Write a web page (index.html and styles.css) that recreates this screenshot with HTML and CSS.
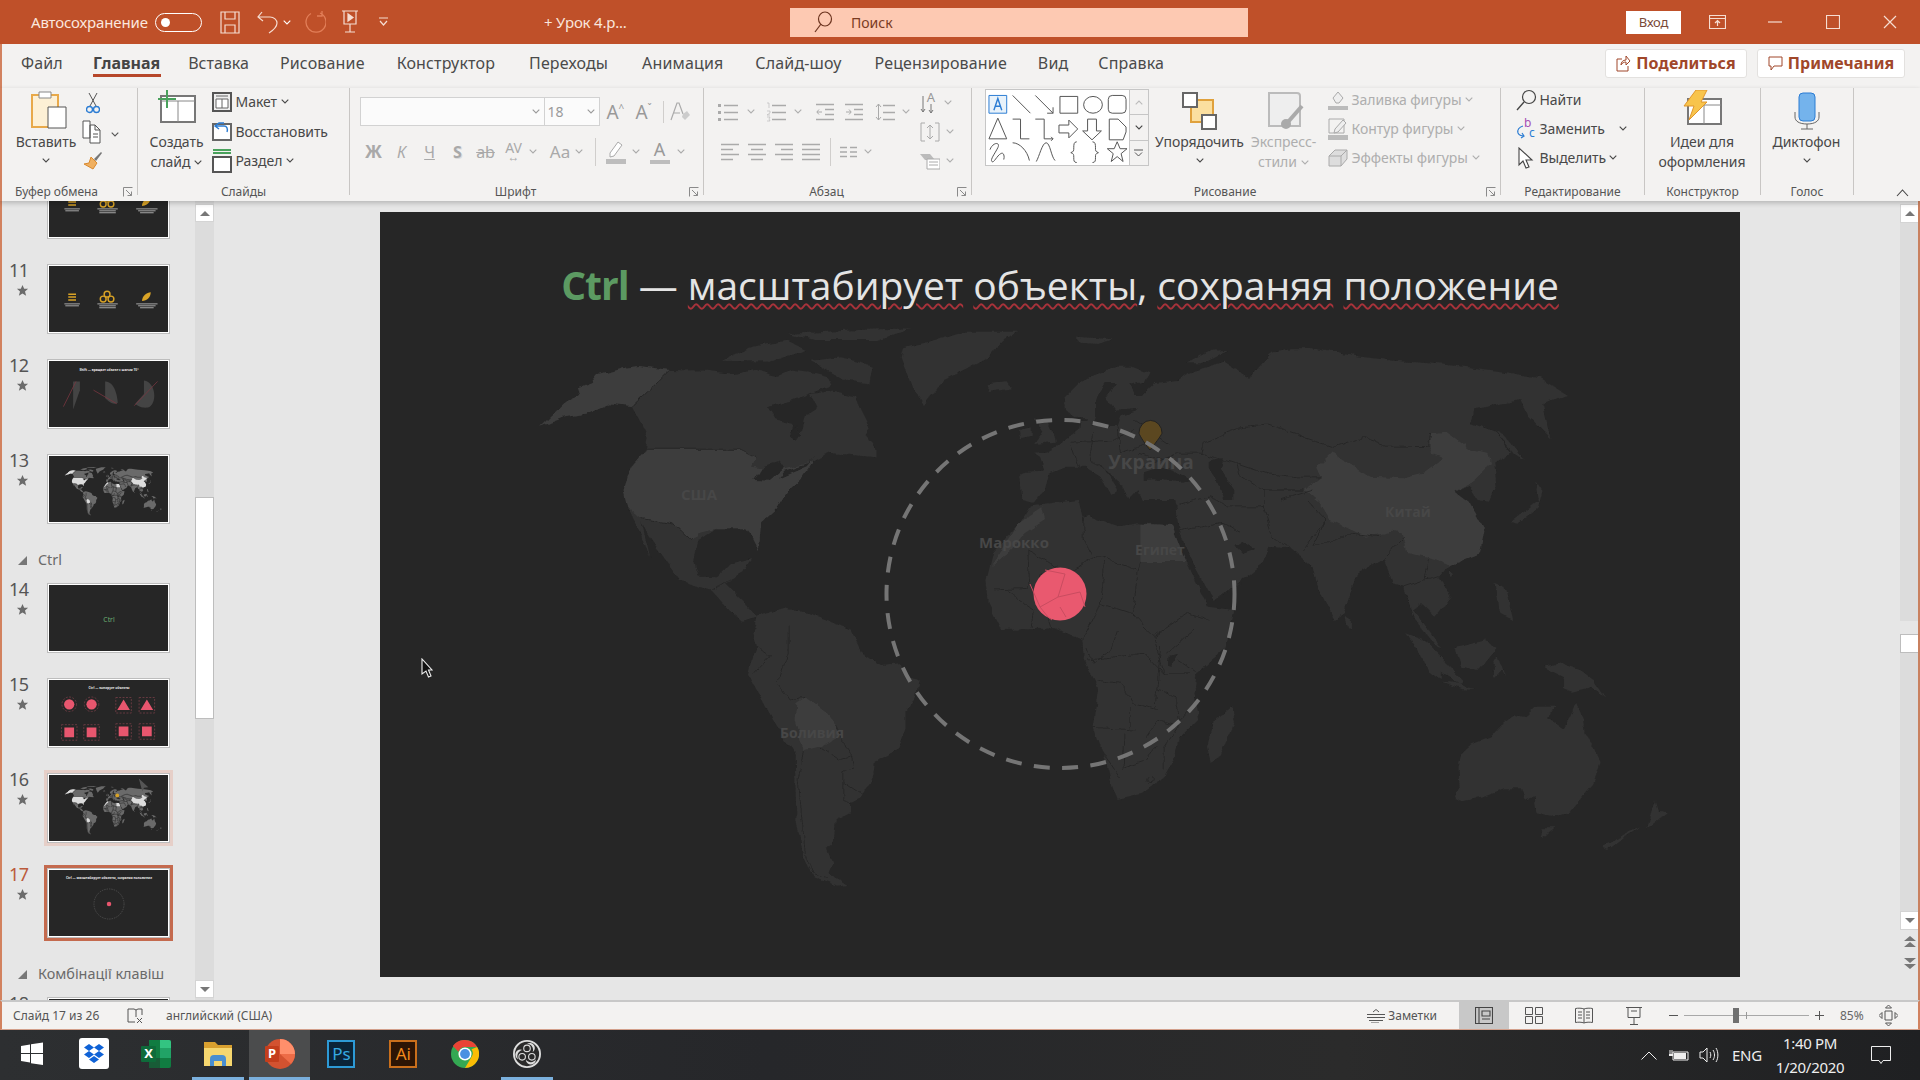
FILE: index.html
```html
<!DOCTYPE html>
<html lang="ru">
<head>
<meta charset="utf-8">
<title>PowerPoint</title>
<link rel="stylesheet" href="styles.css">
</head>
<body>
<svg class="defs" width="0" height="0" aria-hidden="true">
  <filter id="rough" x="-5%" y="-5%" width="110%" height="110%"><feTurbulence type="fractalNoise" baseFrequency=".09" numOctaves="2" seed="4"/><feDisplacementMap in="SourceGraphic" scale="6" xChannelSelector="R" yChannelSelector="G"/></filter>
  <symbol id="ch" viewBox="0 0 8 5"><path d="M.7.7 4 4 7.3.7" fill="none" stroke="currentColor" stroke-width="1.1"/></symbol>
  <symbol id="star" viewBox="0 0 14 14"><path d="M7 1l1.800 4h4.200L9.700 8l1.200 4.600L7 10.200 3.100 12.600 4.300 8 1 5h4.200z" fill="#6b6b6b"/></symbol>
  <symbol id="launch" viewBox="0 0 10 10"><path d="M.5 9.500V.5h9M3 3l5.500 5.500M8.500 4.500v4h-4" fill="none" stroke="#8a8a8a"/></symbol>
  <symbol id="world" viewBox="380 212 1360 765">
    <g transform="translate(520 320) scale(.4464 .3333)">
      <polygon class="land" points="45,320 95,280 95,255 110,240 135,225 130,205 160,190 175,165 230,145 265,138 338,150 420,152 480,162 530,150 575,168 610,152 650,158 690,172 700,195 660,215 610,240 555,262 572,298 610,312 605,350 618,362 632,330 642,282 668,268 650,222 700,212 750,230 762,268 782,322 772,345 796,385 796,412 722,402 690,398 655,425 632,470 600,510 572,570 540,610 535,690 520,650 505,625 440,625 400,660 390,722 400,770 442,772 470,732 520,715 495,762 462,790 500,842 530,892 500,905 470,872 430,812 360,782 322,712 290,650 272,610 292,710 262,620 240,560 232,510 250,440 282,390 286,350 270,310 250,258 200,250 150,280 100,292"/>
      <polygon class="land" points="855,112 860,85 1000,35 1115,35 1082,60 1050,110 950,180 905,255 880,200"/>
      <polygon class="land" points="450,122 520,80 600,62 640,90 560,125"/>
      <polygon class="land" points="600,42 760,30 880,25 800,60 660,60"/>
      <polygon class="land" points="650,122 720,112 790,140 782,190 730,182"/>
      <polygon class="land" points="1045,190 1090,184 1102,205 1050,216"/>
      <polygon class="land" points="1150,292 1178,300 1198,350 1200,365 1152,372 1170,335"/>
      <polygon class="land" points="1118,330 1146,322 1146,350 1120,358"/>
      <polygon class="hi" points="95,255 110,240 135,225 130,205 160,190 175,165 230,145 265,138 338,150 250,258 200,250 150,280 100,292 45,320"/>
      <polygon class="hi" points="285,388 495,388 530,412 520,440 578,452 640,432 655,425 632,470 600,510 572,570 540,610 535,690 520,650 505,625 440,625 400,640 385,662 345,610 270,595 240,560 232,510 250,440"/>
      <polygon class="land" points="1145,556 1250,540 1260,590 1275,585 1340,620 1385,610 1462,615 1462,640 1495,730 1540,860 1600,870 1580,985 1515,1060 1511,1120 1519,1200 1475,1260 1467,1310 1443,1370 1395,1420 1339,1440 1327,1400 1307,1300 1283,1220 1295,1110 1287,1080 1263,1020 1260,960 1200,925 1080,930 1050,850 1045,780 1060,700 1120,610"/>
      <polygon class="hi" points="1390,612 1460,615 1492,726 1390,726"/>
      <polygon class="hi" points="1055,740 1080,690 1118,610 1170,558 1176,600 1130,640 1100,690"/>
      <polygon class="water" points="525,480 545,438 582,425 592,445 560,482"/>
      <polygon class="water" points="580,476 640,442 664,402 644,432 592,455"/>
      <polygon class="water" points="605,335 620,315 628,345 615,360"/>
      <g class="border">
        <polyline points="338,150 252,258"/><polyline points="282,388 495,388 530,412"/><polyline points="272,596 345,612 385,662"/><polyline points="430,810 470,780"/><polyline points="1135,690 1215,750"/><polyline points="1135,690 1140,805 1060,810"/><polyline points="1240,750 1290,710 1310,712 1385,752 1390,726"/><polyline points="1260,590 1262,660 1280,705"/><polyline points="1310,712 1305,800 1300,850"/><polyline points="1385,752 1372,880 1420,950"/><polyline points="1168,760 1160,820 1180,880 1195,930"/><polyline points="1090,810 1150,870 1145,925"/><polyline points="1300,850 1260,960"/><polyline points="1372,880 1300,850"/><polyline points="1420,950 1490,880 1545,900"/><polyline points="1420,950 1440,1060 1500,1060"/><polyline points="1270,1020 1400,1000 1440,1060"/><polyline points="1510,930 1450,1000"/>
      </g>
    </g>
    <g transform="translate(1000 320) scale(.4464 .3333)">
      <polygon class="land" points="45,460 55,455 100,452 90,410 75,398 105,395 130,375 160,345 178,328 180,300 200,300 205,318 195,292 165,290 148,270 145,235 175,195 210,165 260,140 295,140 335,160 325,185 290,195 300,225 320,225 345,190 400,180 420,160 500,125 530,150 560,180 575,150 610,95 650,85 700,85 780,105 880,122 960,130 1040,140 1130,155 1210,175 1270,225 1215,250 1235,355 1185,290 1165,240 1110,255 1060,268 1055,310 1110,335 1145,400 1105,430 1110,500 1095,545 1070,540 1050,495 1020,515 1050,545 1085,630 1075,700 1010,735 985,770 1010,830 975,890 945,850 925,870 955,920 990,985 975,975 930,900 905,800 880,790 860,715 800,760 770,880 750,900 715,810 700,740 650,685 600,680 590,730 480,845 440,750 400,632 395,555 390,540 320,540 310,510 290,540 270,490 235,445 265,510 250,525 225,470 190,440 150,440 110,462 100,510 75,548 50,540"/>
      <polygon class="water" points="205,320 262,320 268,292 312,266 258,272 238,232 262,190 236,190 215,240 215,292"/>
      <polygon class="water" points="320,460 345,450 382,445 430,480 400,486 345,478 320,480"/>
      <polygon class="water" points="470,420 500,415 495,450 525,510 525,540 500,540 490,490 470,450"/>
      <polygon class="water" points="525,675 545,665 572,690 540,702"/>
      <polygon class="hi" points="745,395 780,430 830,470 905,475 950,460 992,415 965,400 965,340 1000,335 1050,385 1095,400 1100,430 1060,480 1020,515 1050,545 1085,630 1075,700 1010,735 960,710 910,700 900,640 880,635 820,650 740,600 720,555 680,510 720,470 710,440"/>
      <polygon class="land" points="1110,330 1130,345 1175,420 1150,400"/>
      <polygon class="land" points="1145,605 1205,545 1200,480 1215,510 1205,565 1160,612"/>
      <polygon class="land" points="1008,755 1016,760 1008,775"/>
      <polygon class="land" points="1108,790 1130,800 1150,900 1118,880"/>
      <polygon class="land" points="910,940 950,960 1000,1030 1040,1085 1030,1095 970,1040"/>
      <polygon class="land" points="1020,985 1090,960 1110,990 1080,1040 1040,1020"/>
      <polygon class="land" points="772,888 786,900 786,925 776,918"/>
      <polygon class="land" points="170,50 250,58 220,72 180,68"/>
      <polygon class="land" points="420,130 470,92 512,90 450,130"/>
      <g class="border">
        <polyline points="455,370 540,320 600,312 650,335 745,382 815,352 860,378 960,380 965,340"/><polyline points="455,370 450,400 530,432 600,462 680,472 720,470"/><polyline points="530,432 540,470 590,510 680,510"/><polyline points="590,510 590,560 610,650 650,685"/><polyline points="630,540 700,510"/><polyline points="690,540 730,600 680,690"/><polyline points="730,600 700,680 790,640 850,650"/><polyline points="860,715 905,650"/><polyline points="160,380 180,445"/><polyline points="210,340 200,420 235,445"/><polyline points="262,322 270,400 330,372"/><polyline points="300,300 380,372"/><polyline points="300,330 250,360 160,370"/><polyline points="320,440 400,400 450,400"/><polyline points="395,555 470,530 510,560 590,560"/><polyline points="400,632 500,610 540,640"/><polyline points="480,845 540,790"/><polyline points="905,800 950,780 985,770"/><polyline points="960,710 950,780"/><polyline points="310,400 370,420"/>
      </g>
    </g>
    <g transform="translate(700 640) scale(.3571 .3333)">
      <polygon class="land" points="158,-70 233,-95 308,-80 421,-30 445,20 460,50 510,75 560,70 580,110 612,120 605,170 575,215 575,270 555,325 490,365 485,410 450,475 420,490 420,520 380,540 375,600 355,625 370,670 360,700 410,735 385,740 320,710 290,650 270,540 265,340 205,240 170,170 135,105 145,60 160,20 150,-20"/>
      <polygon class="hi" points="295,172 350,215 380,255 390,290 340,320 290,330 265,240 270,190"/>
      <polygon class="land" points="1490,200 1497,240 1455,350 1430,365 1420,320 1435,250"/>
      <polygon class="water" points="1312,50 1335,45 1325,80 1310,78"/>
      <g class="border">
        <polyline points="160,20 195,50 150,105"/><polyline points="250,-40 250,40 215,130 250,180 295,172"/><polyline points="290,330 275,420 295,640 320,700 360,715"/><polyline points="340,320 390,360 425,350 430,380 400,395"/><polyline points="400,425 455,465"/><polyline points="400,395 400,480 420,490"/><polyline points="380,255 410,325 425,350"/><polyline points="1110,120 1180,130 1210,190 1285,210"/><polyline points="1100,262 1220,270"/><polyline points="1190,280 1185,385 1250,360 1280,320"/><polyline points="1130,340 1175,410"/><polyline points="1280,150 1330,170 1340,240 1395,180"/><polyline points="1290,20 1280,140 1275,200"/><polyline points="1205,190 1205,265"/><polyline points="1250,290 1280,240 1340,260 1300,320 1300,385"/><polyline points="1080,20 1100,70 1150,30 1170,-30"/><polyline points="1340,60 1390,100"/>
        <ellipse cx="1260" cy="420" rx="9" ry="11"/>
      </g>
    </g>
    <g transform="translate(1240 640) scale(.3571 .3333)">
      <polygon class="land" points="620,340 650,310 700,290 730,255 770,225 800,232 830,200 880,200 860,235 905,265 925,230 940,185 960,235 965,285 990,320 1010,365 990,430 920,520 870,530 830,520 825,465 800,480 790,445 740,445 690,465 620,485 600,475 615,440 612,380"/>
      <polygon class="land" points="850,565 880,565 845,595"/>
      <polygon class="land" points="1165,480 1172,515 1195,520 1140,565"/>
      <polygon class="land" points="1120,562 1060,605 1030,630 1015,620 1090,575"/>
      <polygon class="land" points="565,125 600,128 660,150 620,148"/>
      <polygon class="land" points="605,30 660,20 690,-5 695,50 665,90 620,80"/>
      <polygon class="land" points="710,60 722,50 745,110 730,90 712,110"/>
      <polygon class="land" points="850,80 900,70 960,95 990,120 1025,175 985,140 930,155 905,145 905,110"/>
      <polygon class="land" points="480,0 520,0 565,90 565,118 530,90"/>
    </g>
  </symbol>
</svg>

<div class="app">
  <header class="titlebar">
    <span class="tb-label">Автосохранение</span>
    <span class="toggle"><i></i></span>
    <svg class="tb-save ic-w" width="20" height="23" viewBox="0 0 20 23"><path d="M1 1h18v21H1zM5 1v7h10V1M5 22v-8h10v8"/></svg>
    <svg class="tb-undo ic-w" width="21" height="24" viewBox="0 0 21 24"><path d="M5 2 1 7l5 4M1 7h12c4 0 7 3 7 6 0 4-5 8-8 10"/></svg>
    <svg class="tb-ch" width="8" height="5"><use href="#ch"/></svg>
    <svg class="tb-redo" width="21" height="24" viewBox="0 0 21 24"><path d="M15 3a10 10 0 1 1-9 .5M17 1v5h-5" fill="none" stroke="#e27e58" stroke-width="1.300"/></svg>
    <svg class="tb-show ic-w" width="18" height="24" viewBox="0 0 18 24"><path d="M1 1h16M3 1v13h12V1M9 14v8M4 22h10"/><path d="M7 4v7l5-3.500z"/></svg>
    <svg class="tb-more ic-w" width="9" height="10" viewBox="0 0 9 10"><path d="M0 1h9M1 4l3.500 4L8 4"/></svg>
    <span class="doc-title">+ Урок 4.р...</span>
    <div class="search">
      <svg width="20" height="22" viewBox="0 0 20 22"><ellipse cx="12" cy="8" rx="6.500" ry="7" fill="none" stroke="#6d3520" stroke-width="1.200"/><path d="M8 13 2 21" stroke="#6d3520" stroke-width="1.200"/></svg>
      <span>Поиск</span>
    </div>
    <button class="login">Вход</button>
    <span class="win-btn"><svg class="ic-w" width="17" height="14" viewBox="0 0 17 14"><path d="M.5.500h16v13H.5zM.5 3.500h16M8.500 11V6M6 8l2.500-2.500L11 8"/></svg></span>
    <span class="win-btn"><svg class="ic-w" width="14" height="2" viewBox="0 0 14 2"><path d="M0 1h14"/></svg></span>
    <span class="win-btn"><svg class="ic-w" width="14" height="14" viewBox="0 0 14 14"><path d="M.5.500h13v13H.5z"/></svg></span>
    <span class="win-btn"><svg class="ic-w" width="14" height="14" viewBox="0 0 14 14"><path d="M1 1l12 12M13 1 1 13"/></svg></span>
  </header>

  <nav class="tabs">
    <span>Файл</span><span class="active">Главная</span><span>Вставка</span><span>Рисование</span><span>Конструктор</span><span>Переходы</span><span>Анимация</span><span>Слайд-шоу</span><span>Рецензирование</span><span>Вид</span><span>Справка</span>
    <div class="tab-actions">
      <button class="action share"><svg width="15" height="17" viewBox="0 0 15 17"><path d="M6 4H1v12h11v-5M5 10c0-3 2-5 5-5V1l4 5-4 4V7c-2 0-4 1-5 3z" fill="none" stroke="#a0472a"/></svg>Поделиться</button>
      <button class="action notes"><svg width="15" height="15" viewBox="0 0 15 15"><path d="M1 1h13v9H6l-3 4v-4H1z" fill="none" stroke="#a0472a"/></svg>Примечания</button>
    </div>
  </nav>

  <section class="ribbon">
    <div class="group g1">
      <div class="body">
        <div class="big paste">
          <svg width="42" height="42" viewBox="0 0 42 42"><path d="M7 5h26v32H7z" fill="#fdf0d5" stroke="#e8a94a" stroke-width="2"/><path d="M14 2h12v6H14z" fill="#fff" stroke="#888"/><path d="M23 17h18v21H23z" fill="#fff" stroke="#555"/></svg>
          <span>Вставить</span>
          <svg class="chev" width="8" height="5"><use href="#ch"/></svg>
        </div>
        <div class="col3 tools">
          <div class="row"><svg width="14" height="22" viewBox="0 0 14 22"><path d="M3 1l7 13M11 1 4 14" fill="none" stroke="#555"/><circle cx="3.500" cy="17.500" r="3" fill="none" stroke="#2b7cd3" stroke-width="1.400"/><circle cx="10.500" cy="17.500" r="3" fill="none" stroke="#2b7cd3" stroke-width="1.400"/></svg></div>
          <div class="row"><svg width="20" height="24" viewBox="0 0 20 24"><path d="M1 1h7v17H1z M8 5h5l5 5v13H8z M13 5v5h5M11 14h5M11 17h5" fill="#fff" stroke="#555"/></svg><svg class="chev copy-ch" width="8" height="5"><use href="#ch"/></svg></div>
          <div class="row"><svg width="20" height="20" viewBox="0 0 20 20"><path d="M11 8 18 1l1 1-6 8z" fill="#777"/><path d="M8 6l6 6-4 6-9-5 5-1z" fill="#f0b060" stroke="#d9892e"/></svg></div>
        </div>
      </div>
      <div class="label lab1">Буфер обмена</div>
      <svg class="launcher" width="10" height="10"><use href="#launch"/></svg>
    </div>

    <div class="group g2">
      <div class="body">
        <div class="big new">
          <svg width="42" height="42" viewBox="0 0 42 42"><path d="M5 6h34v26H5z" fill="#fff" stroke="#777" stroke-width="2"/><path d="M22 11v21M5 11h34" stroke="#888" fill="none"/><path d="M11 0v18M2 9h18" stroke="#49a15c" stroke-width="2"/></svg>
          <span>Создать</span>
          <span class="inline-ch">слайд<svg width="8" height="5"><use href="#ch"/></svg></span>
        </div>
        <div class="col3 slides-col">
          <div class="row"><svg width="20" height="20" viewBox="0 0 20 20"><path d="M1 1h18v18H1z" fill="#eee" stroke="#555" stroke-width="2"/><path d="M4 4h12M4 7h12v9H4zM10 7v9" fill="#fff" stroke="#666"/></svg><span>Макет</span><svg width="8" height="5"><use href="#ch"/></svg></div>
          <div class="row"><svg width="20" height="20" viewBox="0 0 20 20"><path d="M1 3h18v16H1z" fill="#fff" stroke="#666" stroke-width="2"/><path d="M12 2H7L3 5l4 3M4 5h8c3 0 4 3 3 6" fill="none" stroke="#2b7cd3" stroke-width="1.400"/></svg><span>Восстановить</span></div>
          <div class="row"><svg width="20" height="24" viewBox="0 0 20 24"><path d="M1 1h18M1 4h18" stroke="#49a15c" stroke-width="2"/><path d="M1 8h18v15H1z" fill="#fff" stroke="#555" stroke-width="2"/></svg><span>Раздел</span><svg width="8" height="5"><use href="#ch"/></svg></div>
        </div>
      </div>
      <div class="label">Слайды</div>
    </div>

    <div class="group g3 off">
      <div class="body stack">
        <div class="frow">
          <div class="field font-f"><svg width="8" height="5"><use href="#ch"/></svg></div>
          <div class="field size-f"><span>18</span><svg width="8" height="5"><use href="#ch"/></svg></div>
          <span class="fs-up">A<small>^</small></span>
          <span class="fs-dn">A<small>ˇ</small></span>
          <i class="vsep sep-a"></i>
          <svg class="clear" width="20" height="22" viewBox="0 0 20 22"><path d="M1 19 7 2h2l4 11M3 12h7" fill="none" stroke="#aaa" stroke-width="1.200"/><path d="M13 13l4-3 3 4-5 5-3-3z" fill="#ccc"/></svg>
        </div>
        <div class="frow fmt">
          <span class="c28 b">Ж</span><span class="c28 it">К</span><span class="c28 ul">Ч</span><span class="c28 sh">S</span><span class="c28 st">ab</span><span class="c28 av">AV<i>↔</i></span>
          <svg class="ch10" width="8" height="5"><use href="#ch"/></svg>
          <span class="aa">Aa</span>
          <svg width="8" height="5"><use href="#ch"/></svg>
          <i class="vsep sep-b"></i>
          <svg class="hl" width="20" height="24" viewBox="0 0 20 24"><path d="M4 13 12 2l4 3-8 11-4 1z" fill="#fff" stroke="#aaa"/><path d="M0 19h20v5H0z" fill="#bdbdbd"/></svg>
          <svg class="hl-ch" width="8" height="5"><use href="#ch"/></svg>
          <span class="fc">A</span>
          <svg class="fc-ch" width="8" height="5"><use href="#ch"/></svg>
        </div>
      </div>
      <div class="label lab-shift">Шрифт</div>
      <svg class="launcher" width="10" height="10"><use href="#launch"/></svg>
    </div>

    <div class="group g4 off">
      <div class="body">
        <div class="stack para">
          <div class="frow">
            <svg width="20" height="20" viewBox="0 0 20 20"><path d="M0 2h3v3H0zM0 9h3v3H0zM0 16h3v3H0z" fill="#aaa"/><path d="M6 3.500h14M6 10.500h14M6 17.500h14" stroke="#aaa" stroke-width="1.300"/></svg>
            <svg class="p1" width="8" height="5"><use href="#ch"/></svg>
            <svg class="p2" width="20" height="20" viewBox="0 0 20 20"><path d="M6 3.500h14M6 10.500h14M6 17.500h14" stroke="#aaa" stroke-width="1.300"/><path d="M1 1h2v5M1 9h3v2l-3 2h3M1 15h3l-1 2 1 2H1" fill="none" stroke="#bbb" stroke-width=".7"/></svg>
            <svg class="p3" width="8" height="5"><use href="#ch"/></svg>
            <svg class="p4" width="18" height="20" viewBox="0 0 18 20"><path d="M0 2.500h18M9 7.500h9M9 12.500h9M0 17.500h18" stroke="#aaa" stroke-width="1.300"/><path d="M6 10H1M3 7.500 .8 10 3 12.500" fill="none" stroke="#aaa"/></svg>
            <svg class="p5" width="18" height="20" viewBox="0 0 18 20"><path d="M0 2.500h18M9 7.500h9M9 12.500h9M0 17.500h18" stroke="#aaa" stroke-width="1.300"/><path d="M1 10h5M4 7.500 6.200 10 4 12.500" fill="none" stroke="#aaa"/></svg>
            <svg class="p6" width="20" height="20" viewBox="0 0 20 20"><path d="M8 3.500h12M8 10.500h12M8 17.500h12" stroke="#aaa" stroke-width="1.300"/><path d="M3.500 2v16M1 5l2.500-3L6 5M1 15l2.500 3L6 15" fill="none" stroke="#aaa"/></svg>
            <svg class="p7" width="8" height="5"><use href="#ch"/></svg>
          </div>
          <div class="frow">
            <svg class="a1" width="18" height="18" viewBox="0 0 18 18"><path d="M0 1.500h18M0 6.500h12M0 11.500h18M0 16.500h12" stroke="#aaa" stroke-width="1.300"/></svg>
            <svg class="a2" width="18" height="18" viewBox="0 0 18 18"><path d="M0 1.500h18M3 6.500h12M0 11.500h18M3 16.500h12" stroke="#aaa" stroke-width="1.300"/></svg>
            <svg class="a2" width="18" height="18" viewBox="0 0 18 18"><path d="M0 1.500h18M6 6.500h12M0 11.500h18M6 16.500h12" stroke="#aaa" stroke-width="1.300"/></svg>
            <svg class="a2" width="18" height="18" viewBox="0 0 18 18"><path d="M0 1.500h18M0 6.500h18M0 11.500h18M0 16.500h18" stroke="#aaa" stroke-width="1.300"/></svg>
            <i class="vsep sep-c"></i>
            <svg class="a3" width="17" height="12" viewBox="0 0 17 12"><path d="M0 1.500h7M10 1.500h7M0 6h7M10 6h7M0 10.500h7M10 10.500h7" stroke="#aaa" stroke-width="1.300"/></svg>
            <svg class="a4" width="8" height="5"><use href="#ch"/></svg>
          </div>
        </div>
        <div class="col3 para-col">
          <div class="row"><svg width="18" height="24" viewBox="0 0 18 24"><path d="M3 5v16M1 18l2 3 2-3M11 22V13M9 19l2 3 2-3" fill="none" stroke="#777"/><text x="11" y="11" class="dir">A</text></svg><svg class="pc-ch" width="8" height="5"><use href="#ch"/></svg></div>
          <div class="row"><svg width="20" height="20" viewBox="0 0 20 20"><path d="M5 1H1v18h4M15 1h4v18h-4M10 3v14M7 6l3-3 3 3M7 14l3 3 3-3" fill="none" stroke="#aaa"/></svg><svg class="pc-ch" width="8" height="5"><use href="#ch"/></svg></div>
          <div class="row"><svg width="20" height="18" viewBox="0 0 20 18"><path d="M0 2h10l5 6H5z" fill="#bbb"/><path d="M7 7h13v10H7z" fill="#fff" stroke="#aaa"/><path d="M9 10h9M9 13h9" stroke="#aaa"/></svg><svg class="pc-ch" width="8" height="5"><use href="#ch"/></svg></div>
        </div>
      </div>
      <div class="label lab-shift">Абзац</div>
      <svg class="launcher" width="10" height="10"><use href="#launch"/></svg>
    </div>

    <div class="group g5">
      <div class="body">
        <div class="gallery">
          <svg width="145" height="75" viewBox="0 0 145 75" fill="none" stroke="#555" stroke-width="1">
            <path d="M3 5h18v18H3z" fill="#e8f2fa" stroke="#2b7cd3"/><path d="M8 20l4-12 4 12M9.500 16h5" stroke="#2b7cd3" stroke-width="1.400"/>
            <path d="M27 5l18 18M50 5l18 18M68 17v6h-6M75 6h18v17H75zM118 14.500a9.500 8.500 0 1 1-19 0 9.500 8.500 0 1 1 19 0zM124 9a4 4 0 0 1 4-4h10a4 4 0 0 1 4 4v10a4 4 0 0 1-4 4h-10a4 4 0 0 1-4-4z"/>
            <path d="M12 28 3 49h18zM27 29h8v20h9M50 29h9v20h9M66 47l2 2-2 2M74 35h10v-5l9 9-9 9v-5H74zM103 29h9v12h5l-9.500 9-9.500-9h5zM125 29h9l8 8v5l-3 8h-14V38z"/>
            <path d="M4 60c3-8 11-8 8-2-3 6-8 12-6 14s5-6 9-8c3-2 4 3 3 6M27 53c7 0 15 8 17 18M51 72c3-5 6-19 10-19s5 14 9 18M92 52c-3 0-3 3-3 6s0 4-3 5c3 1 3 2 3 5s0 5 3 5M108 52c3 0 3 3 3 6s0 4 3 5c-3 1-3 2-3 5s0 5-3 5M133 52l3 7h7l-6 5 2 8-6-5-6 5 2-8-6-5h7z"/>
          </svg>
          <div class="gal-btns">
            <span><svg width="8" height="5" class="flip"><use href="#ch"/></svg></span>
            <span class="on"><svg width="8" height="5"><use href="#ch"/></svg></span>
            <span class="on"><svg width="9" height="8" viewBox="0 0 9 8"><path d="M0 1h9M1 3.500l3.500 3.500L8 3.500" fill="none" stroke="#555"/></svg></span>
          </div>
        </div>
        <div class="big arrange">
          <svg width="36" height="38" viewBox="0 0 36 38"><path d="M9 8h22v22H9z" fill="#fbdf9f" stroke="#e0a13c" stroke-width="2"/><path d="M1 1h14v14H1zM20 23h14v14H20z" fill="#fff" stroke="#666" stroke-width="2"/></svg>
          <span>Упорядочить</span>
          <svg class="chev" width="8" height="5"><use href="#ch"/></svg>
        </div>
        <div class="big styles off">
          <svg width="40" height="38" viewBox="0 0 40 38"><path d="M5 1h28a3 3 0 0 1 3 3v30H5z" fill="#eee" stroke="#bbb" stroke-width="2"/><path d="M38 14 24 30" stroke="#aaa" stroke-width="4"/><circle cx="22" cy="32" r="5" fill="#aaa"/></svg>
          <span>Экспресс-</span>
          <span class="inline-ch">стили<svg width="8" height="5"><use href="#ch"/></svg></span>
        </div>
        <div class="col3 shapes-col off">
          <div class="row"><svg width="20" height="20" viewBox="0 0 20 20"><path d="M5 8l5-6 5 6-4 5H8z" fill="#eee" stroke="#aaa"/><path d="M0 16h20v4H0z" fill="#bbb"/></svg><span>Заливка фигуры</span><svg width="8" height="5"><use href="#ch"/></svg></div>
          <div class="row"><svg width="20" height="22" viewBox="0 0 20 22"><path d="M1 1h15v14H1z" fill="none" stroke="#aaa"/><path d="M7 11l8-9 3 3-8 9-4 1z" fill="#eee" stroke="#aaa"/><path d="M0 17h20v5H0z" fill="#bbb"/></svg><span>Контур фигуры</span><svg width="8" height="5"><use href="#ch"/></svg></div>
          <div class="row"><svg width="20" height="18" viewBox="0 0 20 18"><path d="M1 7 7 1h12v9l-6 7H1z" fill="#ddd" stroke="#aaa"/><path d="M1 7h12v10M13 7l6-6" fill="none" stroke="#aaa"/></svg><span>Эффекты фигуры</span><svg width="8" height="5"><use href="#ch"/></svg></div>
        </div>
      </div>
      <div class="label lab-shift">Рисование</div>
      <svg class="launcher" width="10" height="10"><use href="#launch"/></svg>
    </div>

    <div class="group g6">
      <div class="body">
        <div class="col3 edit-col">
          <div class="row"><svg width="21" height="22" viewBox="0 0 21 22"><circle cx="13" cy="8" r="6.500" fill="none" stroke="#444" stroke-width="1.200"/><path d="M8 13 1 21" stroke="#444" stroke-width="1.400"/></svg><span>Найти</span></div>
          <div class="row"><svg width="21" height="22" viewBox="0 0 21 22"><text x="8" y="9" class="rep-b">b</text><text x="13" y="19" class="rep-c">c</text><path d="M7 8C3 9 1 12 2 15c1 2 4 3 6 3M6 15l2 3-3 2" fill="none" stroke="#2b7cd3" stroke-width="1.200"/></svg><span>Заменить</span><svg class="rep-ch" width="8" height="5"><use href="#ch"/></svg></div>
          <div class="row"><svg width="21" height="22" viewBox="0 0 21 22"><path d="M3 1v17l4-4 3 7 3-1-3-7h6z" fill="#fff" stroke="#444" stroke-width="1.100"/></svg><span>Выделить</span><svg class="sel-ch" width="8" height="5"><use href="#ch"/></svg></div>
        </div>
      </div>
      <div class="label">Редактирование</div>
    </div>

    <div class="group g7">
      <div class="body">
        <div class="big ideas">
          <svg width="40" height="42" viewBox="0 0 40 42"><path d="M6 9h33v25H6z" fill="#fff" stroke="#777" stroke-width="2"/><path d="M6 15h33M22 15v19" stroke="#888" fill="none"/><path d="M14 0h11l-6 12h6L7 30l5-14H2z" fill="#f8c44c" stroke="#e0962c"/></svg>
          <span>Идеи для</span>
          <span>оформления</span>
        </div>
      </div>
      <div class="label">Конструктор</div>
    </div>

    <div class="group g8">
      <div class="body">
        <div class="big dict">
          <svg width="26" height="38" viewBox="0 0 26 38"><rect x="5" y="1" width="16" height="28" rx="4" fill="#74b3ec" stroke="#2b7cd3"/><path d="M1 20v5c0 4 4 7 12 7s12-3 12-7v-5M13 32v5M7 37h12" fill="none" stroke="#666"/></svg>
          <span>Диктофон</span>
          <svg class="chev" width="8" height="5"><use href="#ch"/></svg>
        </div>
      </div>
      <div class="label">Голос</div>
    </div>
    <svg class="collapse" width="13" height="8" viewBox="0 0 13 8"><path d="M1 7l5.500-6L12 7" fill="none" stroke="#444" stroke-width="1.100"/></svg>
  </section>

  <main class="workspace">
    <aside class="sidebar">
      <div class="thumbs">
        <div class="slide-row first"><div class="num-col"></div><div class="thumb"><svg viewBox="0 0 121 68"><use href="#t-icons"/></svg></div></div>
        <div class="slide-row"><div class="num-col"><span class="num">11</span><svg width="13" height="13"><use href="#star"/></svg></div><div class="thumb">
          <svg viewBox="0 0 121 68"><g id="t-icons"><path d="M18 28h8M18 31h8M18 34h8" stroke="#d9a326" stroke-width="1.500"/><circle cx="58" cy="28" r="3" fill="none" stroke="#d9a326" stroke-width="1.500"/><circle cx="54" cy="33" r="3" fill="none" stroke="#d9a326" stroke-width="1.500"/><circle cx="62" cy="33" r="3" fill="none" stroke="#d9a326" stroke-width="1.500"/><path d="M94 35c0-5 5-9 9-9 0 5-4 9-9 9z" fill="#d9a326"/><path d="M14 38h16M15 40h14M48 38h21M50 40h17M50 42h17M88 38h22M90 40h18M92 42h14" stroke="#ccc" stroke-width=".8"/></g></svg></div></div>
        <div class="slide-row"><div class="num-col"><span class="num">12</span><svg width="13" height="13"><use href="#star"/></svg></div><div class="thumb">
          <svg viewBox="0 0 121 68"><text x="60" y="9" class="t-title">Shift — вращает объект с шагом 15°</text><path d="M23 20h7v9l-7 20z" fill="#444"/><path d="M56 20c12 0 13 22 13 22-5 4-13-5-13-5z" fill="#444"/><path d="M96 19c13 2 14 25 4 28-8 1-13-4-13-4l9-10z" fill="#444"/><path d="M13 46 26 20M44 29l24 14M86 45l24-25" stroke="#7a3540" stroke-width=".8"/></svg></div></div>
        <div class="slide-row"><div class="num-col"><span class="num">13</span><svg width="13" height="13"><use href="#star"/></svg></div><div class="thumb mapthumb"><svg viewBox="0 0 1360 765"><use href="#world" width="1360" height="765"/></svg></div></div>
        <div class="section"><svg width="9" height="9" viewBox="0 0 9 9"><path d="M9 0v9H0z" fill="#777"/></svg>Ctrl</div>
        <div class="slide-row"><div class="num-col"><span class="num">14</span><svg width="13" height="13"><use href="#star"/></svg></div><div class="thumb"><svg viewBox="0 0 121 68"><text x="60" y="37" class="t-ctrl">Ctrl</text></svg></div></div>
        <div class="slide-row"><div class="num-col"><span class="num">15</span><svg width="13" height="13"><use href="#star"/></svg></div><div class="thumb">
          <svg viewBox="0 0 121 68"><text x="60" y="8" class="t-title">Ctrl — копирует объекты</text>
            <g fill="#e8566e"><circle cx="19" cy="24" r="5.300"/><circle cx="42" cy="24" r="5.300"/><path d="M75 19l6.500 11h-13zM99 19l6.500 11h-13z"/><path d="M14 48h10v10H14zM37 48h10v10H37zM70 47h10v10H70zM94 47h10v10H94z"/></g>
            <g fill="none" stroke="#7a4048" stroke-dasharray="2 1.500" stroke-width=".8"><circle cx="19" cy="24" r="7.500"/><circle cx="42" cy="24" r="7.500"/><path d="M67 17h16v16H67zM91 17h16v16H91zM11 45h16v16H11zM34 45h16v16H34zM67 44h16v16H67zM91 44h16v16H91z"/></g></svg></div></div>
        <div class="slide-row hover"><div class="num-col"><span class="num">16</span><svg width="13" height="13"><use href="#star"/></svg></div><div class="thumb mapthumb"><svg viewBox="0 0 1360 765"><use href="#world" width="1360" height="765"/><circle cx="770" cy="225" r="22" fill="#d9a326"/><path d="M1020 30l110 100-50 5-20 45z" fill="#555"/></svg></div></div>
        <div class="slide-row current"><div class="num-col"><span class="num">17</span><svg width="13" height="13"><use href="#star"/></svg></div><div class="thumb">
          <svg viewBox="0 0 121 68"><text x="60" y="8" class="t-title">Ctrl — масштабирует объекты, сохраняя положение</text><circle cx="60" cy="34" r="15.500" fill="none" stroke="#6b6b6b" stroke-width=".5" stroke-dasharray="1.500 1"/><circle cx="60" cy="34" r="2.300" fill="#e8566e"/></svg></div></div>
        <div class="section"><svg width="9" height="9" viewBox="0 0 9 9"><path d="M9 0v9H0z" fill="#777"/></svg>Комбінації клавіш</div>
        <div class="slide-row"><div class="num-col"><span class="num">18</span></div><div class="thumb"></div></div>
      </div>
      <div class="vscroll left">
        <span class="sbtn"><svg width="10" height="5" viewBox="0 0 10 5"><path d="M5 0l5 5H0z" fill="#777"/></svg></span>
        <span class="sb-gap1"></span>
        <span class="sb-thumb"></span>
        <span class="sb-fill"></span>
        <span class="sbtn"><svg width="10" height="5" viewBox="0 0 10 5"><path d="M0 0h10L5 5z" fill="#777"/></svg></span>
      </div>
    </aside>

    <div class="canvas">
      <article class="slide">
        <svg class="map" width="1360" height="765" viewBox="0 0 1360 765">
          <g filter="url(#rough)"><use href="#world" width="1360" height="765"/></g>
          <g class="labels">
            <text x="319" y="288" class="m-usa">США</text>
            <text x="634" y="336" class="m-mar">Марокко</text>
            <text x="780" y="343" class="m-egy">Египет</text>
            <text x="771" y="257" class="m-ukr">Украина</text>
            <text x="1028" y="305" class="m-chi">Китай</text>
            <text x="432" y="526" class="m-bol">Боливия</text>
          </g>
          <path class="pin" d="M770 238c-8-10-11-16-11-17a11 12 0 0 1 23 0c0 1-4 7-12 17z"/>
          <circle class="ring" cx="680.500" cy="382" r="174"/>
          <circle class="dot" cx="680" cy="382" r="26.500"/>
          <g class="dot-lines"><polyline points="665,358 685,362 678,385 660,395 668,405"/><polyline points="678,385 700,380 705,395"/><polyline points="668,405 672,408"/><polyline points="650,372 660,395"/><polyline points="680,395 686,405"/></g>
        </svg>
        <h1 class="slide-title"><b>Ctrl</b> — <u>масштабирует</u> <u>объекты</u>, <u>сохраняя</u> <u>положение</u></h1>
        <svg class="cursor" width="12" height="20" viewBox="0 0 12 20"><path d="M1 1v15l4-3 2.500 6 2.500-1-2.500-6H11z" fill="#111" stroke="#eee" stroke-width="1.100"/></svg>
      </article>
    </div>

    <div class="vscroll right">
      <span class="sbtn"><svg width="10" height="5" viewBox="0 0 10 5"><path d="M5 0l5 5H0z" fill="#777"/></svg></span>
      <span class="sr-gap1"></span>
      <span class="sr-ghost"></span>
      <span class="sr-thumb"></span>
      <span class="sr-fill"></span>
      <span class="sbtn"><svg width="10" height="5" viewBox="0 0 10 5"><path d="M0 0h10L5 5z" fill="#777"/></svg></span>
      <svg class="pg pg1" width="12" height="12" viewBox="0 0 12 12"><path d="M6 0l6 5H0zM6 6l6 5H0z" fill="#777"/></svg>
      <svg class="pg pg2" width="12" height="12" viewBox="0 0 12 12"><path d="M0 1h12L6 6zM0 7h12l-6 5z" fill="#777"/></svg>
    </div>
  </main>

  <footer class="status">
    <span class="st-slide">Слайд 17 из 26</span>
    <svg class="st-spell" width="17" height="16" viewBox="0 0 17 16"><path d="M4 1H1v13h7M4 1h3l2 1 2-1h4v6M9 2v7" fill="none" stroke="#555"/><path d="M10 10l5 5M15 10l-5 5" stroke="#555"/></svg>
    <span class="st-lang">английский (США)</span>
    <span class="st-notes"><svg width="18" height="14" viewBox="0 0 18 14"><path d="M0 5.500h18M0 8.500h18M2 11.500h14M4 14h8M6 3l3-2.500L12 3" fill="none" stroke="#555"/></svg>Заметки</span>
    <span class="st-view sel"><svg width="18" height="17" viewBox="0 0 18 17"><path d="M.5.500h17v16H.5zM4 .5v16M7 4h8v5H7zM7 12h8" fill="none" stroke="#444" stroke-width="1.100"/></svg></span>
    <span class="st-view"><svg width="18" height="17" viewBox="0 0 18 17"><path d="M.5.500h7v7h-7zM10.500.5h7v7h-7zM.5 9.500h7v7h-7zM10.500 9.500h7v7h-7z" fill="none" stroke="#555"/></svg></span>
    <span class="st-view"><svg width="18" height="17" viewBox="0 0 18 17"><path d="M9 2C7 1 3 1 .5 1.500v14c3-.5 6-.5 8.500.5 2.500-1 5.500-1 8.500-.5v-14C15 1 11 1 9 2zM9 2v14M3 5h4M3 8h4M3 11h4M11 5h4M11 8h4M11 11h4" fill="none" stroke="#555"/></svg></span>
    <span class="st-view"><svg width="16" height="18" viewBox="0 0 16 18"><path d="M0 .5h16M2 .5v10h12V.5M8 11v6M4 17.500h8M5 4h6" fill="none" stroke="#555"/></svg></span>
    <div class="zoomer">
      <i class="z-minus"></i>
      <div class="z-track"><i class="z-thumb"></i><i class="z-tick"></i></div>
      <span class="z-plus"></span>
      <span class="z-val">85%</span>
      <svg class="z-fit" width="19" height="21" viewBox="0 0 19 21"><path d="M6 6h7v9H6z" fill="none" stroke="#555"/><path d="M9.500 0l3 3h-6zM9.500 21l-3-3h6zM0 10.500l3-3v6zM19 10.500l-3 3v-6z" fill="none" stroke="#555"/></svg>
    </div>
  </footer>

  <div class="taskbar">
    <span class="tk tk-start"><svg width="22" height="24" viewBox="0 0 22 24"><path d="M0 4l9-1.500V11H0zM10 2.300 22 .5V11H10zM0 12h9v8.500L0 19zM10 12h12v11l-12-1.800z" fill="#fff"/></svg></span>
    <span class="tk"><svg width="30" height="31" viewBox="0 0 30 31"><rect width="30" height="31" rx="3" fill="#fff"/><path d="M10 6l5 3.500-5 3.500-5-3.500zM20 6l5 3.500-5 3.500-5-3.500zM10 13l5 3.500-5 3.500-5-3.500zM20 13l5 3.500-5 3.500-5-3.500zM15 18l5 3.500-5 3.500-5-3.500z" fill="#0f62d6"/></svg></span>
    <span class="tk"><svg width="30" height="30" viewBox="0 0 30 30"><path d="M8 1h20a2 2 0 0 1 2 2v24a2 2 0 0 1-2 2H8z" fill="#107c41"/><path d="M19 1h9a2 2 0 0 1 2 2v6H19z" fill="#33c481"/><path d="M19 9h11v10H19z" fill="#21a366"/><path d="M8 19h11v10H8z" fill="#185c37"/><rect y="7" width="15" height="16" rx="1" fill="#0e6b3a"/><text x="7.500" y="19" class="tk-x">X</text></svg></span>
    <span class="tk open"><svg width="28" height="25" viewBox="0 0 28 25"><path d="M0 1h11l3 3h14v4H0z" fill="#d9a02f"/><path d="M0 7h28v18H0z" fill="#f6d76f"/><path d="M6 18a4 4 0 0 1 4-4h8a4 4 0 0 1 4 4v7h-4v-5h-8v5H6z" fill="#4a8fd0"/></svg></span>
    <span class="tk open active"><svg width="30" height="30" viewBox="0 0 30 30"><circle cx="15" cy="15" r="15" fill="#d35230"/><path d="M15 0a15 15 0 0 1 15 15H15z" fill="#ff8f6b"/><path d="M15 15h15a15 15 0 0 1-4 10z" fill="#ed6c47"/><rect y="7" width="14" height="16" rx="1" fill="#c43e1c"/><text x="7" y="19" class="tk-p">P</text></svg></span>
    <span class="tk"><span class="adobe ps">Ps</span></span>
    <span class="tk"><span class="adobe ai">Ai</span></span>
    <span class="tk"><svg width="28" height="28" viewBox="0 0 30 30"><circle cx="15" cy="15" r="15" fill="#34a853"/><path d="M15 0a15 15 0 0 1 13 7.500H15a7.500 7.500 0 0 0-7 5L2 6.500A15 15 0 0 1 15 0z" fill="#ea4335"/><path d="M28 7.500A15 15 0 0 1 15 30l6.500-11A7.500 7.500 0 0 0 22 10z" fill="#fbbc05"/><circle cx="15" cy="15" r="7" fill="#fff"/><circle cx="15" cy="15" r="5.300" fill="#4a90e2"/></svg></span>
    <span class="tk open"><svg width="28" height="28" viewBox="0 0 30 30"><circle cx="15" cy="15" r="14" fill="#2a2a2a" stroke="#ddd" stroke-width="2"/><g fill="#ddd"><path id="obs-c" d="M15 4a6.500 6.500 0 0 1 6 9 5 5 0 0 0-6-9z"/><use href="#obs-c" transform="rotate(120 15 15)"/><use href="#obs-c" transform="rotate(240 15 15)"/></g><g fill="none" stroke="#ddd" stroke-width="1.200"><circle cx="15" cy="9" r="3.500"/><circle cx="9.800" cy="18" r="3.500"/><circle cx="20.200" cy="18" r="3.500"/></g></svg></span>
    <div class="tray">
      <svg class="tr-up" width="16" height="9" viewBox="0 0 16 9"><path d="M.5 8.500 8 1l7.500 7.500" fill="none" stroke="#eee"/></svg>
      <svg class="tr-bat" width="20" height="11" viewBox="0 0 20 11"><path d="M4 2h15v8H4zM1 0v4M3 0v4" fill="none" stroke="#eee"/><path d="M5 3h12v6H5zM0 4h4v2H0z" fill="#eee"/></svg>
      <svg class="tr-vol" width="20" height="16" viewBox="0 0 20 16"><path d="M1 5h3l4-4v14l-4-4H1zM11 5c1 2 1 4 0 6M14 3c2 3 2 7 0 10M17 1c2.500 4 2.500 10 0 14" fill="none" stroke="#eee"/></svg>
      <span class="tr-lang">ENG</span>
      <span class="tr-clock"><span>1:40 PM</span><span>1/20/2020</span></span>
      <svg class="tr-note" width="20" height="19" viewBox="0 0 20 19"><path d="M.5.500h19v14H12l-2 3-2-3H.5z" fill="none" stroke="#eee"/></svg>
    </div>
  </div>
</div>
</body>
</html>
```

FILE: styles.css
```css
*{box-sizing:border-box}
html,body{margin:0;padding:0;width:1920px;height:1080px;overflow:hidden}
body{font-family:"Noto Sans","Open Sans",sans-serif;color:#444;background:#222}
.defs{position:absolute}
svg{flex:none;display:block}
button{font:inherit;border:0;padding:0;cursor:default}
.app{width:1920px;height:1080px;display:flex;flex-direction:column;position:relative;overflow:hidden}

/* title bar */
.titlebar{height:44px;background:#bf5029;display:flex;align-items:center;padding-left:31px;color:#fff;font-size:15px;flex:none}
.tb-label{width:116px;white-space:nowrap;color:#fbe7de;letter-spacing:-.15px}
.toggle{margin-left:8px;width:47px;height:19px;border:1.500px solid #fff;border-radius:10px;display:flex;align-items:center;padding-left:5px}
.toggle i{width:9px;height:9px;border-radius:50%;background:#fff}
.ic-w,.ic-w path{fill:none;stroke:#f6ddd2;stroke-width:1.200}
.tb-save{margin-left:18px}
.tb-undo{margin-left:17px}
.tb-ch{margin-left:5px;color:#fff}
.tb-redo{margin-left:14px}
.tb-show{margin-left:15px}
.tb-show path:last-child{fill:#f6ddd2}
.tb-more{margin-left:20px}
.doc-title{margin-left:156px;width:246px;color:#f9e6dc;letter-spacing:-.2px;white-space:nowrap}
.search{width:458px;height:29px;background:#fdc9b2;display:flex;align-items:center;padding-left:23px;color:#7a3b22;font-size:14px}
.search span{margin-left:18px}
.login{margin-left:auto;margin-right:8px;width:55px;height:23px;background:#fff;color:#7a4a38;font-size:13px;letter-spacing:-.2px}
.win-btn{width:57.500px;display:flex;justify-content:center;align-items:center}
.win-btn:last-child{margin-right:1px}

/* tabs */
.tabs{height:44px;flex:none;background:#f3f2f1;display:flex;align-items:center;gap:32px;padding:0 15px 6px 21px;font-size:16px;color:#4a4a4a;border-left:2px solid #d2825f}
.tabs>span{white-space:nowrap;position:relative;letter-spacing:.15px}
.tabs>span:nth-child(1){margin-left:-2px}
.tabs>span:nth-child(2){margin-left:-2px}
.tabs>span:nth-child(3){margin-left:-4px;letter-spacing:0}
.tabs>span:nth-child(4){margin-left:-1px}
.tabs>span:nth-child(6){margin-left:2px}
.tabs>span:nth-child(7){margin-left:2px}
.tabs>span:nth-child(9){margin-left:1px}
.tabs>span:nth-child(10){margin-left:-1px}
.tabs>span:nth-child(11){margin-left:-2px}
.tabs .active{font-weight:700;color:#444;letter-spacing:0}
.tabs .active::after{content:"";position:absolute;left:0;right:-1px;bottom:-3px;height:3px;background:#b7472a}
.tab-actions{margin-left:auto;display:flex;gap:10px}
.action{height:29px;background:#fff;border:1px solid #e3e1df;border-radius:3px;color:#a0472a;font-weight:700;font-size:16px;display:flex;align-items:center;justify-content:center;gap:5px;letter-spacing:0}
.share{width:142px;letter-spacing:.2px}
.notes{width:148px}

/* ribbon */
.ribbon{height:113px;flex:none;background:#f3f2f1;display:flex;position:relative;z-index:3;border-left:2px solid #d2825f;box-shadow:0 2px 5px rgba(0,0,0,.22);font-size:14px;letter-spacing:-.05px;color:#484848}
.group{position:relative;display:grid;grid-template-rows:95px 18px}
.group::after{content:"";position:absolute;right:0;top:0;bottom:6px;width:1px;background:#c8c6c4}
.g1{width:135.500px}.g2{width:212px}.g3{width:354px}.g4{width:268px}.g5{width:529px}.g6{width:144px}.g7{width:116px}.g8{width:93px}
.body{display:flex;align-items:flex-start}
.label{text-align:center;font-size:12px;line-height:18px;color:#555;letter-spacing:0}
.lab1{text-align:left;padding-left:13px}
.lab-shift{padding-right:22px}
.launcher{position:absolute;right:5px;bottom:4px}
.big{display:flex;flex-direction:column;align-items:center;padding-top:2px;line-height:20px;white-space:nowrap;flex:none}
.big>svg:first-child{height:42px}
.chev{margin-top:6px}
.inline-ch{display:flex;align-items:center;gap:4px}
.col3{display:flex;flex-direction:column;flex:none}
.row{height:29px;display:flex;align-items:center;gap:4px;white-space:nowrap}
.off,.off .label{color:#aeaeae}
.off .label{color:#555}

.paste{width:70px;margin-left:9px}
.tools{align-items:flex-start}
.tools .row{width:40px;justify-content:center;margin-left:-8px}
.copy-ch{margin-left:5px;margin-right:-14px;color:#555}
.new{width:72px;margin-left:3px}
.slides-col{margin-left:-1px;margin-top:-1px}
.slides-col .row{height:29.600px}
.stack{display:flex;flex-direction:column;gap:11px;padding-top:9px;padding-left:10px;align-items:stretch}
.frow{height:29px;display:flex;align-items:center}
.field{height:29px;background:#fbfbfb;border:1px solid #d2d2d2;display:flex;align-items:center;justify-content:flex-end;padding-right:4px;color:#9a9a9a}
.font-f{width:185px}
.size-f{width:56px;margin-left:-1px;justify-content:space-between;padding-left:3px;font-size:14px}
.fs-up,.fs-dn{font-size:19px;color:#999;display:flex;width:24px;line-height:20px}
.fs-up{margin-left:7px}
.fs-dn{margin-left:5px}
.fs-up small,.fs-dn small{font-size:10px;line-height:12px}
.vsep{display:block;width:1px;background:#d0cecc;flex:none}
.sep-a{height:22px;margin-left:3px}
.clear{margin-left:6px}
.fmt{color:#a9a9a9;font-size:16px}
.c28{width:28px;text-align:center;flex:none}
.fmt .b{font-weight:700;font-size:17px}
.fmt .it{font-style:italic}
.fmt .ul{text-decoration:underline}
.fmt .sh{font-weight:700;text-shadow:1px 1px 0 #ddd}
.fmt .st{text-decoration:line-through}
.fmt .av{font-size:14px;line-height:11px;display:flex;flex-direction:column;align-items:center}
.fmt .av i{font-style:normal;font-size:12px;line-height:8px}
.ch10{margin-left:1px}
.aa{margin-left:9px;width:29px;text-align:center;font-size:17px}
.sep-b{height:28px;margin-left:12px}
.hl{margin-left:10px}
.hl-ch{margin-left:6px}
.fc{margin-left:10px;width:20px;text-align:center;font-size:18px;line-height:18px;border-bottom:4px solid #bdbdbd;height:24px;color:#999}
.fc-ch{margin-left:7px}
.para{padding-left:14px;flex:none;width:206px}
.p1{margin-left:9px}.p2{margin-left:11px}.p3{margin-left:8px}.p4{margin-left:14px}.p5{margin-left:11px}.p6{margin-left:12px}.p7{margin-left:7px}
.a1{margin-left:3px}.a2{margin-left:9px}
.sep-c{height:28px;margin-left:10px}
.a3{margin-left:9px}.a4{margin-left:7px}
.para-col{margin-left:10px}
.pc-ch{margin-left:2px}
.dir{font-size:13px;fill:#999;text-anchor:middle}
.gallery{margin-left:13px;margin-top:1px;width:164px;height:77px;background:#fff;border:1px solid #c6c6c6;display:flex;flex:none}
.gallery>svg{width:143px}
.gal-btns{display:flex;flex-direction:column;width:19px;border-left:1px solid #c6c6c6}
.gal-btns span{flex:1;display:flex;align-items:center;justify-content:center;background:#f3f2f1;border-bottom:1px solid #c6c6c6;color:#bbb}
.gal-btns span:last-child{border-bottom:0}
.gal-btns .on{color:#444}
.flip{transform:rotate(180deg)}
.arrange{width:90px;margin-left:6px}
.styles{width:78px}
.shapes-col{margin-left:5px;margin-top:-3px}
.edit-col{margin-left:15px;margin-top:-3px}
.edit-col .row{gap:3px}
.rep-b{font-size:12px;fill:#a64fb5;letter-spacing:0}
.rep-c{font-size:12px;fill:#2b7cd3}
.rep-ch{margin-left:11px}
.ideas{width:115px}
.dict{width:92px}
.collapse{position:absolute;right:11px;bottom:4px}

/* workspace */
.workspace{flex:none;height:799px;display:flex;background:#e6e6e6;border-left:2px solid #d2825f;border-right:2px solid #c9805f;position:relative;overflow:hidden}
.sidebar{width:214px;flex:none;display:flex;overflow:hidden}
.thumbs{width:193px;flex:none;overflow:hidden}
.slide-row{height:70px;margin-bottom:25px;display:flex;position:relative}
.first{margin-top:-32px}
.num-col{width:45px;flex:none;display:flex;flex-direction:column;padding-left:7px;align-items:flex-start;margin-top:-5px}
.num{font-size:18px;line-height:22px;color:#555;width:22px;letter-spacing:-.5px}
.num-col svg{margin-left:7px;margin-top:3px}
.thumb{width:123px;height:70px;border:1px solid #bdbdbd;background:#262626;box-shadow:inset 0 0 0 1px #fff;overflow:hidden;flex:none;position:relative;padding:2px}
.thumb svg{width:119px;height:66px;overflow:hidden;display:block}
.hover .thumb{outline:3px solid #e6cfc8}
.current .thumb{outline:3px solid #c46a4e}
.current .num{color:#bb5a3c}
.section{height:34px;display:flex;align-items:flex-start;gap:11px;padding-left:16px;font-size:14.400px;line-height:22px;color:#6a6a6a}
.section svg{margin-top:7px}
.mapthumb{--land:#6a6a6a;--hi:#dcdcdc;--water:#262626;--bord:rgba(38,38,38,.5)}
.t-title{font-size:3.300px;fill:#e8e8e8;text-anchor:middle;font-weight:700}
.t-ctrl{font-size:7px;fill:#6cb073;text-anchor:middle}
.vscroll{width:19px;flex:none;display:flex;flex-direction:column;background:#dcdcdc}
.vscroll.left{padding-top:3px}
.sbtn{height:18px;background:#fff;border:1px solid #d4d4d4;display:flex;align-items:center;justify-content:center;flex:none}
.sb-gap1{height:275px;flex:none}
.sb-thumb{height:222px;background:#fff;border:1px solid #bdbdbd;flex:none}
.sb-fill{height:261px;flex:none}
.canvas{flex:1;padding:11px 0 0 164px;min-width:0}
.slide{width:1360px;height:765px;background:#262626;position:relative;overflow:hidden;padding-top:43px}
.map{position:absolute;left:0;top:0}
.land{fill:var(--land,#323232)}
.hi{fill:var(--hi,#3d3d3d)}
.water{fill:var(--water,#262626)}
.border{fill:none;stroke:var(--bord,#282828);stroke-width:1}
.border *{vector-effect:non-scaling-stroke}
.labels text{text-anchor:middle;font-family:"Open Sans",sans-serif;font-weight:700;fill:#474747}
.m-usa{font-size:15px}
.m-mar{font-size:15px}
.m-egy{font-size:14px}
.m-ukr{font-size:19px}
.m-chi{font-size:14px}
.m-bol{font-size:14px}
.pin{fill:#5b4720;stroke:#222;stroke-width:1}
.ring{fill:none;stroke:#757575;stroke-width:4;stroke-dasharray:16 12.400}
.dot{fill:#e9596f}
.dot-lines polyline{fill:none;stroke:#c94c60;stroke-width:1}
.slide-title{position:relative;margin:0;text-align:center;font-family:"Open Sans",sans-serif;font-weight:400;font-size:39px;line-height:60px;color:#e4e4e4;white-space:nowrap}
.slide-title b{color:#5c9a62;font-weight:700;letter-spacing:-1px}
.slide-title u{text-decoration:underline wavy #a8323a 1.500px;text-underline-offset:3px}
.cursor{position:absolute;left:41px;top:446px}
.vscroll.right{width:19px;background:transparent;position:relative;padding-top:3px;margin-right:-1px}
.right .sbtn{height:19px}
.sr-gap1{height:398px;background:#dcdcdc;flex:none}
.sr-ghost{height:13px;background:#e6e6e6;flex:none}
.sr-thumb{height:19px;background:#fff;border:1px solid #bdbdbd;flex:none}
.sr-fill{height:258px;background:#dcdcdc;flex:none}
.pg{align-self:center}
.pg1{margin-top:6px}
.pg2{margin-top:9px}

/* status */
.status{height:30px;flex:none;background:#f3f2f1;border-top:2px solid #c8c8c8;border-left:2px solid #d2825f;border-right:2px solid #d2825f;border-bottom:1px solid #d2a08c;display:flex;align-items:center;font-size:12px;color:#555;padding-left:11px}
.st-slide{width:89px;white-space:nowrap}
.st-spell{margin-left:25px}
.st-lang{margin-left:22px;white-space:nowrap}
.st-notes{margin-left:auto;display:flex;align-items:center;gap:3px;margin-right:22px}
.st-view{width:50px;height:100%;display:flex;align-items:center;justify-content:center}
.st-view.sel{background:#c8c8c8}
.zoomer{display:flex;align-items:center;margin-left:5px;width:254px;padding-left:2px}
.z-minus{width:9px;height:1px;background:#555;margin-left:3px}
.z-track{width:125px;height:1px;background:#a8a8a8;margin-left:6px;position:relative}
.z-thumb{position:absolute;left:49px;top:-7px;width:6px;height:15px;background:#707070}
.z-tick{position:absolute;left:62px;top:-3px;width:1px;height:7px;background:#999}
.z-plus{width:9px;height:9px;margin-left:6px;background:linear-gradient(#555,#555) center/100% 1px no-repeat,linear-gradient(#555,#555) center/1px 100% no-repeat}
.z-val{margin-left:16px;width:30px;white-space:nowrap;color:#666}
.z-fit{margin-left:9px}

/* taskbar */
.taskbar{flex:none;height:50px;display:flex;align-items:center;background:linear-gradient(90deg,#2d2f31 0,#26272a 40%,#2b2b2b 70%,#1f2022 100%)}
.tk{width:61.900px;height:100%;display:flex;align-items:center;justify-content:center;position:relative;flex:none;padding-bottom:3px}
.tk-start{margin-left:1px}
.tk.active{background:#4b4c4d}
.tk.open::after{content:"";position:absolute;left:5px;right:5px;bottom:0;height:3px;background:#7bb0dd}
.tk.active::after{left:0;right:0}
.tk-x,.tk-p{fill:#fff;font-size:13px;font-weight:700;text-anchor:middle}
.adobe{width:28px;height:28px;border:2px solid;display:flex;align-items:center;justify-content:center;font-size:17px;line-height:1}
.ps{border-color:#2d9ad6;background:#0b2438;color:#36a9e1}
.ai{border-color:#c96f1c;background:#2c1505;color:#f28a1d}
.tray{margin-left:auto;display:flex;align-items:center;color:#eee;font-size:15px;padding-right:29px}
.tr-up{margin-right:12px}
.tr-bat{margin-right:10px}
.tr-vol{margin-right:13px}
.tr-lang{margin-right:13px;letter-spacing:-.2px}
.tr-clock{display:flex;flex-direction:column;align-items:center;width:70px;line-height:24px;margin-right:26px;letter-spacing:-.3px;white-space:nowrap}
```
